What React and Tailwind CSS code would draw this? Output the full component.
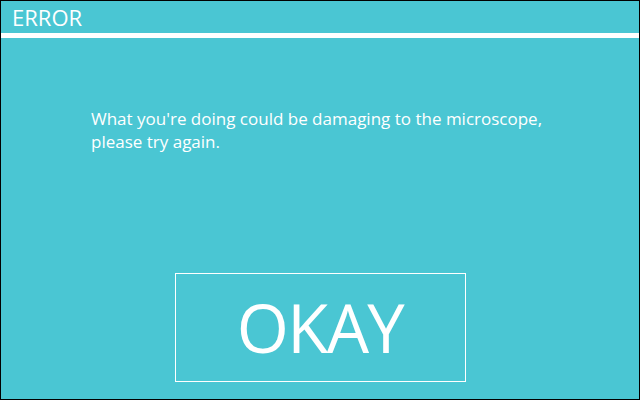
export default function App() {
  return (
    <div
      className="w-[640px] h-[400px] border border-black bg-[#4ac6d3] text-white flex flex-col"
      style={{ fontFamily: '"Open Sans", "Noto Sans", sans-serif' }}
    >
      <div className="h-[32px] flex items-center pl-[11px] text-[22px] leading-none">ERROR</div>
      <div className="h-[5px] bg-white"></div>
      <div className="flex-1 flex flex-col">
        <p className="pl-[90px] pt-[69px] text-[17px] leading-[23px] w-[580px]">
          What you're doing could be damaging to the microscope, please try again.
        </p>
        <div className="flex justify-center mt-auto mb-[17px]">
          <button className="w-[291px] h-[109px] border border-white flex items-center justify-center text-[67px] leading-none tracking-tight">
            OKAY
          </button>
        </div>
      </div>
    </div>
  );
}
